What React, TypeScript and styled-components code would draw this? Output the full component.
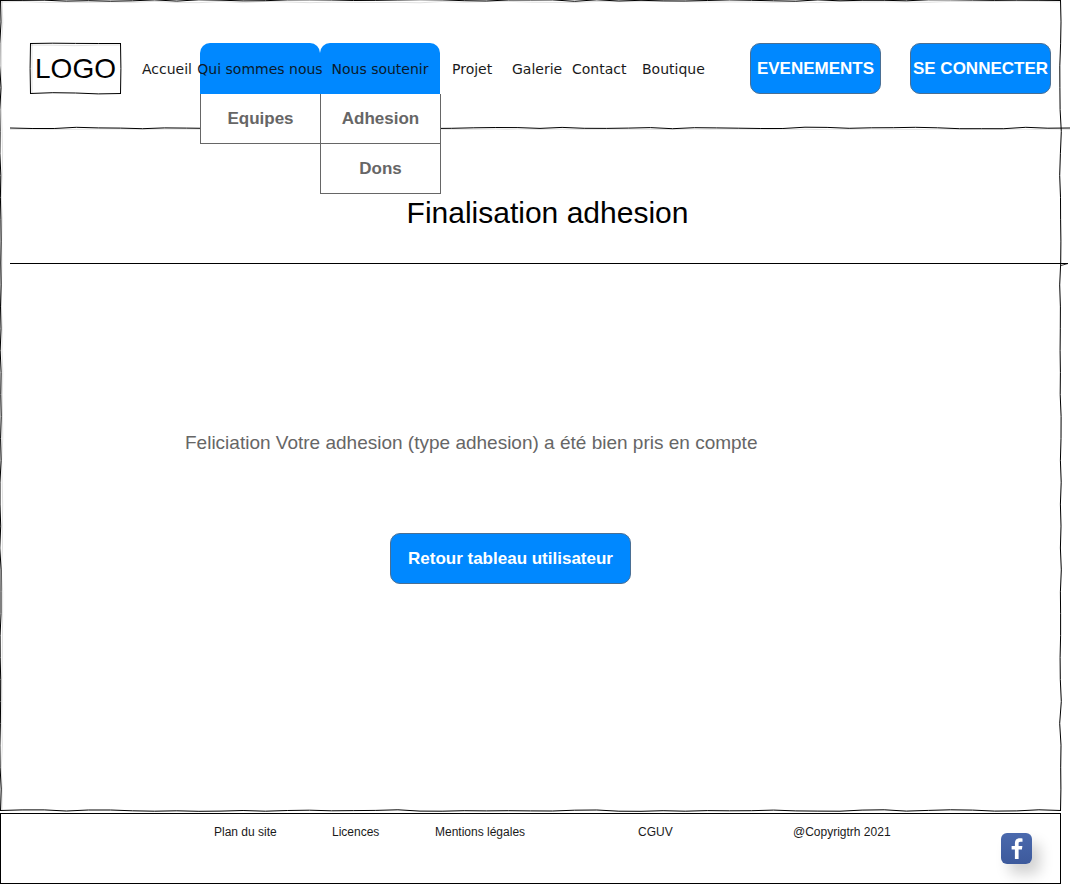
import React from "react";
import styled, { createGlobalStyle } from "styled-components";

const GlobalStyle = createGlobalStyle`
  html, body {
    margin: 0;
    padding: 0;
    background: #ffffff;
  }
  * {
    box-sizing: border-box;
  }
`;

// hand drawn line, same seed gives same line
const wobble = (x1: number, y1: number, x2: number, y2: number, seed: number, amp = 0.8) => {
  const len = Math.hypot(x2 - x1, y2 - y1);
  const count = Math.max(2, Math.round(len / 22));
  let d = `M${x1} ${y1}`;
  for (let i = 1; i <= count; i++) {
    const t = i / count;
    const n = Math.sin(i * 12.9898 + seed * 78.233) * 43758.5453;
    const off = i === count ? 0 : ((n - Math.floor(n)) * 2 - 1) * amp;
    const x = x1 + (x2 - x1) * t + (y1 === y2 ? 0 : off);
    const y = y1 + (y2 - y1) * t + (y1 === y2 ? off : 0);
    d += ` L${x.toFixed(1)} ${y.toFixed(1)}`;
  }
  return d;
};

const SketchRect = ({ w, h, seed }: { w: number; h: number; seed: number }) => (
  <FrameSvg width={w + 2} height={h + 2} viewBox={`-1 -1 ${w + 2} ${h + 2}`}>
    <path d={wobble(0, 0.5, w, 0.5, seed)} fill="none" stroke="#000" />
    <path d={wobble(w - 0.5, 0, w - 0.5, h, seed + 1)} fill="none" stroke="#000" />
    <path d={wobble(0, h - 0.5, w, h - 0.5, seed + 2)} fill="none" stroke="#000" />
    <path d={wobble(0.5, 0, 0.5, h, seed + 3)} fill="none" stroke="#000" />
    <path d={wobble(0, 2, w, 2, seed + 4)} fill="none" stroke="#000" strokeOpacity="0.12" />
    <path d={wobble(2, 0, 2, h, seed + 5)} fill="none" stroke="#000" strokeOpacity="0.12" />
  </FrameSvg>
);

const navPlain = [
  { label: "Projet", width: 60 },
  { label: "Galerie", width: 60 },
  { label: "Contact", width: 70 },
  { label: "Boutique", width: 108 },
];

const footerLinks = ["Plan du site", "Licences", "Mentions légales", "CGUV", "@Copyrigtrh 2021"];

export default function App() {
  return (
    <Page>
      <GlobalStyle />
      <Sheet>
        <SketchRect w={1061} h={811} seed={3} />
        <Header>
          <Logo>
            <SketchRect w={91} h={51} seed={9} />
            LOGO
          </Logo>
          <Nav>
            <NavItem $width={58}>Accueil</NavItem>
            <Menu $front>
              <MenuHead>Qui sommes nous</MenuHead>
              <SubMenu>
                <SubItem>Equipes</SubItem>
              </SubMenu>
            </Menu>
            <Menu>
              <MenuHead>Nous soutenir</MenuHead>
              <SubMenu>
                <SubItem>Adhesion</SubItem>
                <SubItem>Dons</SubItem>
              </SubMenu>
            </Menu>
            <PlainItems>
              {navPlain.map((item) => (
                <NavItem key={item.label} $width={item.width}>
                  {item.label}
                </NavItem>
              ))}
            </PlainItems>
          </Nav>
          <HeaderActions>
            <HeaderButton $width={131}>EVENEMENTS</HeaderButton>
            <HeaderButton $width={141}>SE CONNECTER</HeaderButton>
          </HeaderActions>
        </Header>
        <Divider width="1060" height="4" viewBox="0 0 1060 4">
          <path d={wobble(0, 2, 1060, 2, 21, 0.9)} fill="none" stroke="#000" />
          <path d={wobble(0, 3.5, 1060, 3.5, 22, 0.5)} fill="none" stroke="#000" strokeOpacity="0.1" />
        </Divider>
        <TitleBand>
          <Title>Finalisation adhesion</Title>
        </TitleBand>
        <Divider width="1060" height="4" viewBox="0 0 1060 4">
          <path d="M0 1.5H1058" fill="none" stroke="#000" />
          <path d="M1051 3.5L1058 1.5" fill="none" stroke="#000" strokeWidth="0.8" />
        </Divider>
        <Main>
          <Message>Feliciation Votre adhesion (type adhesion) a été bien pris en compte</Message>
          <BackButton>Retour tableau utilisateur</BackButton>
        </Main>
      </Sheet>
      <Footer>
        {footerLinks.map((link) => (
          <FooterLink key={link}>{link}</FooterLink>
        ))}
        <FacebookBadge>
          <svg width="31" height="31" viewBox="0 0 31 31">
            <path
              d="M17.6 26V16.6H20.9L21.4 12.9H17.6V10.6C17.6 9.5 17.9 8.8 19.5 8.8H21.5V5.5C21.1 5.4 20 5.3 18.7 5.3C15.9 5.3 13.9 7 13.9 10.2V12.9H10.6V16.6H13.9V26H17.6Z"
              fill="#ffffff"
            />
          </svg>
        </FacebookBadge>
      </Footer>
    </Page>
  );
}

const Page = styled.div`
  position: relative;
  width: 1072px;
  height: 885px;
  overflow: hidden;
  background: #ffffff;
  font-family: "Liberation Sans", Arial, sans-serif;
`;
const Sheet = styled.div`
  position: relative;
  width: 1061px;
  height: 811px;
`;
const FrameSvg = styled.svg`
  position: absolute;
  top: -1px;
  left: -1px;
  pointer-events: none;
`;
const Header = styled.header`
  position: relative;
  z-index: 2;
  height: 126px;
  padding: 43px 0 0 30px;
  display: flex;
  align-items: flex-start;
`;
const Logo = styled.div`
  position: relative;
  flex: none;
  width: 91px;
  height: 51px;
  display: flex;
  align-items: center;
  justify-content: center;
  font-size: 28px;
  color: #000000;
`;
const Nav = styled.nav`
  flex: none;
  display: flex;
  margin-left: 21px;
  height: 51px;
  width: 608px;
  font-family: "DejaVu Sans", Verdana, sans-serif;
  font-size: 14px;
  color: #1a1a1a;
`;
const PlainItems = styled.div`
  display: flex;
  padding-left: 12px;
`;
const NavItem = styled.div<{ $width: number }>`
  width: ${(p) => p.$width}px;
  height: 51px;
  display: flex;
  align-items: center;
  white-space: nowrap;
`;
const Menu = styled.div<{ $front?: boolean }>`
  position: relative;
  z-index: ${(p) => (p.$front ? 1 : 0)};
  width: 120px;
  height: 51px;
`;
const MenuHead = styled.div`
  height: 51px;
  display: flex;
  align-items: center;
  justify-content: center;
  white-space: nowrap;
  background: #0088ff;
  border-radius: 10px 10px 0 0;
  color: #0b1a2b;
`;
const SubMenu = styled.div`
  position: absolute;
  top: 100%;
  left: 0;
  width: 121px;
  display: flex;
  flex-direction: column;
`;
const SubItem = styled.div`
  height: 50px;
  display: flex;
  align-items: center;
  justify-content: center;
  background: #ffffff;
  border: 1px solid #666666;
  border-top: none;
  font-family: "Liberation Sans", Arial, sans-serif;
  font-size: 17px;
  font-weight: 700;
  color: #666666;
`;
const HeaderActions = styled.div`
  flex: none;
  display: flex;
  gap: 29px;
`;
const HeaderButton = styled.button<{ $width: number }>`
  width: ${(p) => p.$width}px;
  height: 51px;
  padding: 0;
  display: flex;
  align-items: center;
  justify-content: center;
  white-space: nowrap;
  background: #0088ff;
  border: 1px solid #4a6f94;
  border-radius: 10px;
  font-family: "Liberation Sans", Arial, sans-serif;
  font-size: 17px;
  font-weight: 700;
  color: #ffffff;
`;
const Divider = styled.svg`
  display: block;
  margin-left: 10px;
`;
const TitleBand = styled.section`
  height: 132px;
  padding: 65px 0 0 34px;
  text-align: center;
`;
const Title = styled.h1`
  margin: 0;
  font-size: 30px;
  line-height: 36px;
  font-weight: 400;
  color: #000000;
`;
const Main = styled.main`
  padding: 166px 0 0 185px;
`;
const Message = styled.p`
  margin: 0;
  font-size: 19px;
  line-height: 22px;
  color: #666666;
`;
const BackButton = styled.button`
  display: flex;
  align-items: center;
  justify-content: center;
  width: 241px;
  height: 51px;
  margin: 79px 0 0 205px;
  padding: 0;
  background: #0088ff;
  border: 1px solid #4a6f94;
  border-radius: 10px;
  font-family: "Liberation Sans", Arial, sans-serif;
  font-size: 17px;
  font-weight: 700;
  color: #ffffff;
`;
const Footer = styled.footer`
  display: grid;
  grid-template-columns: 118px 103px 203px 155px 208px 31px;
  align-items: start;
  width: 1061px;
  height: 71px;
  margin-top: 2px;
  padding: 10px 0 0 213px;
  border: 1px solid #000000;
`;
const FooterLink = styled.span`
  font-size: 12px;
  line-height: 16px;
  color: #1a1a1a;
  white-space: nowrap;
`;
const FacebookBadge = styled.div`
  width: 31px;
  height: 31px;
  margin-top: 9px;
  border-radius: 6px;
  background: linear-gradient(180deg, #4a69ad 0%, #3d5a9c 100%);
  box-shadow: 8px 10px 14px rgba(0, 0, 0, 0.18);
  svg {
    display: block;
  }
`;
